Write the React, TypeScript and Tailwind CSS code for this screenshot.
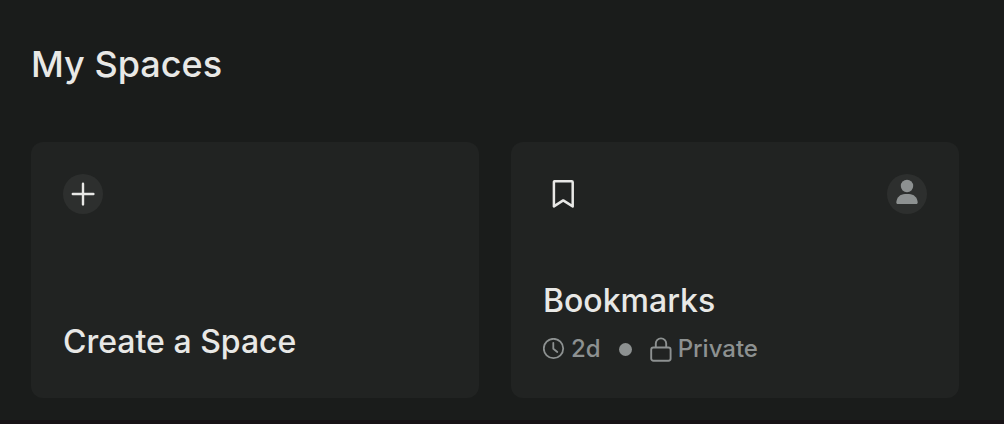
import * as React from "react";

function PlusIcon() {
  return (
    <svg viewBox="0 0 40 40" className="size-10" fill="none" aria-hidden="true">
      <path d="M20 9.800v20.600M9.800 20h20.600" stroke="currentColor" strokeWidth="2.4" strokeLinecap="round" />
    </svg>
  );
}

function BookmarkIcon() {
  return (
    <svg viewBox="0 0 40 40" className="size-10" fill="none" aria-hidden="true">
      <path
        d="M11.300 7.200h17.400a1 1 0 0 1 1 1v24.200l-9.500-6-9.300 6V8.200a1 1 0 0 1 .4-1z"
        stroke="currentColor"
        strokeWidth="2.5"
        strokeLinejoin="round"
      />
    </svg>
  );
}

function PersonIcon() {
  return (
    <svg viewBox="0 0 40 40" className="size-10" fill="currentColor" aria-hidden="true">
      <circle cx="20" cy="12" r="6.200" />
      <path d="M9.300 28.500C9.600 23.500 13.200 20 18 20h4c4.800 0 8.400 3.500 8.700 8.500 0 .9-.5 1.500-1.400 1.500H10.700c-.9 0-1.400-.6-1.400-1.500z" />
    </svg>
  );
}

function ClockIcon() {
  return (
    <svg viewBox="0 0 22 22" className="size-[22px]" fill="none" stroke="currentColor" strokeWidth="1.800" aria-hidden="true">
      <circle cx="10.500" cy="10.500" r="9.700" />
      <path d="M10.300 4.800v6l4 3.200" strokeLinecap="round" strokeLinejoin="round" />
    </svg>
  );
}

function LockIcon() {
  return (
    <svg viewBox="0 0 22 26" className="h-[26px] w-[22px]" fill="none" stroke="currentColor" strokeWidth="1.900" aria-hidden="true">
      <rect x="1.200" y="11.500" width="19.400" height="13.200" rx="2.200" />
      <path d="M5.800 11.500V7.600a5.200 5.200 0 0 1 10.400 0v3.900" />
    </svg>
  );
}

export default function App() {
  return (
    <main className="min-h-screen border-b-4 border-[#171216] bg-[#1a1c1b] pt-11 pr-[45px] pb-[22px] pl-[31px] font-['Inter','Liberation_Sans',sans-serif] text-[#e8e8e6]">
      <h1 className="text-4xl leading-10 font-medium">My Spaces</h1>

      <div className="mt-[58px] grid grid-cols-2 gap-8">
        <button
          type="button"
          className="flex min-h-64 flex-col items-start justify-between rounded-xl bg-[#212322] px-8 pt-8 pb-9 text-left"
        >
          <span className="rounded-full bg-[#2d2f2e]">
            <PlusIcon />
          </span>
          <span className="text-[32px] leading-10 font-medium">Create a Space</span>
        </button>

        <a href="#bookmarks" className="flex min-h-64 flex-col justify-between rounded-xl bg-[#212322] p-8">
          <div className="flex items-center justify-between">
            <BookmarkIcon />
            <span className="rounded-full bg-[#2d2f2e] text-[#8d9191]">
              <PersonIcon />
            </span>
          </div>
          <div>
            <h2 className="text-[32px] leading-10 font-medium">Bookmarks</h2>
            <div className="mt-[11px] flex items-center text-2xl leading-[34px] font-medium text-[#8d9191]">
              <ClockIcon />
              <span className="ml-1.5">2d</span>
              <span className="mx-[18px] size-[13px] rounded-full bg-[#8d9191]" />
              <LockIcon />
              <span className="ml-1.5">Private</span>
            </div>
          </div>
        </a>
      </div>
    </main>
  );
}
